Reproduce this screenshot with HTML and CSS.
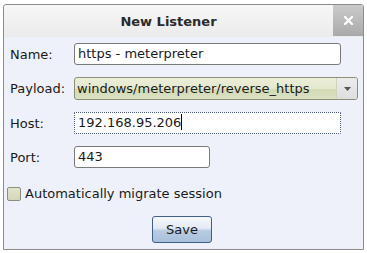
FILE: index.html
```html
<!DOCTYPE html>
<html lang="en">
<head>
    <meta charset="UTF-8">
    <title>New Listener</title>
    <link rel="stylesheet" href="styles.css">
</head>
<body>

    <div class="window">
        <div class="titlebar">
            <span class="title">New Listener</span>
            <button class="close-button">
                <svg width="9" height="9" viewBox="0 0 9 9"><path d="M1 1 L8 8 M8 1 L1 8" stroke="#ffffff" stroke-width="2.2" stroke-linecap="square"/></svg>
            </button>
        </div>

        <div class="content">
            <div class="form-grid">
                <div class="field-label">Name:</div>
                <div class="field"><div class="text-input name-input">https - meterpreter</div></div>

                <div class="field-label">Payload:</div>
                <div class="field">
                    <div class="combo">
                        <span class="combo-text">windows/meterpreter/reverse_https</span>
                        <span class="combo-arrow">
                            <svg width="7" height="4" viewBox="0 0 7 4"><path d="M0 0 H7 L3.5 4 Z" fill="#555"/></svg>
                        </span>
                    </div>
                </div>

                <div class="field-label">Host:</div>
                <div class="field"><div class="text-input host-input focused">192.168.95.206<span class="caret"></span></div></div>

                <div class="field-label">Port:</div>
                <div class="field"><div class="text-input port-input">443</div></div>
            </div>

            <label class="check-row">
                <span class="checkbox"></span>
                <span class="check-label">Automatically migrate session</span>
            </label>

            <div class="button-row">
                <button class="save-button">Save</button>
            </div>
        </div>
    </div>

</body>
</html>
```

FILE: styles.css
```css
/* General Reset */
* {
    margin: 0;
    padding: 0;
    box-sizing: border-box;
}

body {
    background: #ffffff;
    font-family: 'DejaVu Sans', sans-serif;
    font-size: 13px;
    color: #1a1a1a;
    padding: 4px 4px 0 3px;
}

/* Dialog frame */
.window {
    width: 361px;
    height: 246px;
    border: 1px solid #8c8c8c;
    border-radius: 3px 3px 0 0;
    background: #eef1f9;
    display: flex;
    flex-direction: column;
}

.titlebar {
    height: 32px;
    display: flex;
    align-items: stretch;
    background: linear-gradient(#f7f7f7, #ebebeb);
    border-radius: 3px 3px 0 0;
}

.title {
    flex: 1;
    display: flex;
    align-items: center;
    justify-content: center;
    font-weight: bold;
    font-size: 13px;
    color: #2a2a2a;
}

.close-button {
    width: 30px;
    height: 31px;
    border: none;
    display: flex;
    align-items: center;
    justify-content: center;
    background: linear-gradient(#cbcbcb, #a9a9a9);
    border-radius: 0 2px 0 0;
}

/* Form */
.content {
    flex: 1;
    padding: 6px 6px 0 6px;
    display: flex;
    flex-direction: column;
}

.form-grid {
    display: grid;
    grid-template-columns: 64px 1fr;
    row-gap: 12px;
    align-items: center;
}

.field-label {
    color: #1a1a1a;
}

.text-input {
    height: 22px;
    line-height: 20px;
    padding: 0 3px;
    background: #ffffff;
    border: 1px solid #7a7a7a;
    border-radius: 3px;
    white-space: nowrap;
}

.name-input,
.host-input {
    width: 267px;
}

.port-input {
    width: 136px;
}

.host-input.focused {
    border: 1px dotted #4a5a78;
    border-radius: 1px;
}

.caret {
    display: inline-block;
    width: 1px;
    height: 16px;
    background: #000;
    vertical-align: -3px;
}

.combo {
    width: 284px;
    height: 23px;
    display: flex;
    align-items: stretch;
    border: 1px solid #8a8f78;
    border-radius: 3px;
    background: linear-gradient(#eceed9 0%, #e4e8cd 50%, #d3dab5 52%, #dbe1c2 100%);
}

.combo-text {
    flex: 1;
    line-height: 21px;
    padding-left: 2px;
}

.combo-arrow {
    width: 21px;
    display: flex;
    align-items: center;
    justify-content: center;
    border-left: 1px solid #d0d4bc;
    background: linear-gradient(#ececec, #dedede);
    border-radius: 0 2px 2px 0;
}

/* Checkbox */
.check-row {
    display: flex;
    align-items: center;
    gap: 4px;
    margin-top: 18px;
    margin-left: -3px;
}

.checkbox {
    width: 14px;
    height: 14px;
    border: 1px solid #8b8e7c;
    border-radius: 2px;
    background: linear-gradient(#e2e4cc, #d3d7b7);
}

/* Button */
.button-row {
    display: flex;
    justify-content: center;
    margin-top: 15px;
    margin-right: 3px;
}

.save-button {
    width: 60px;
    height: 27px;
    font-family: 'DejaVu Sans', sans-serif;
    font-size: 13px;
    color: #1a1a1a;
    border: 1px solid #3f5f8a;
    border-radius: 3px;
    background: linear-gradient(#f6f8fb 0%, #e3eaf3 45%, #b8cbe2 55%, #a9c0dc 100%);
}
```
